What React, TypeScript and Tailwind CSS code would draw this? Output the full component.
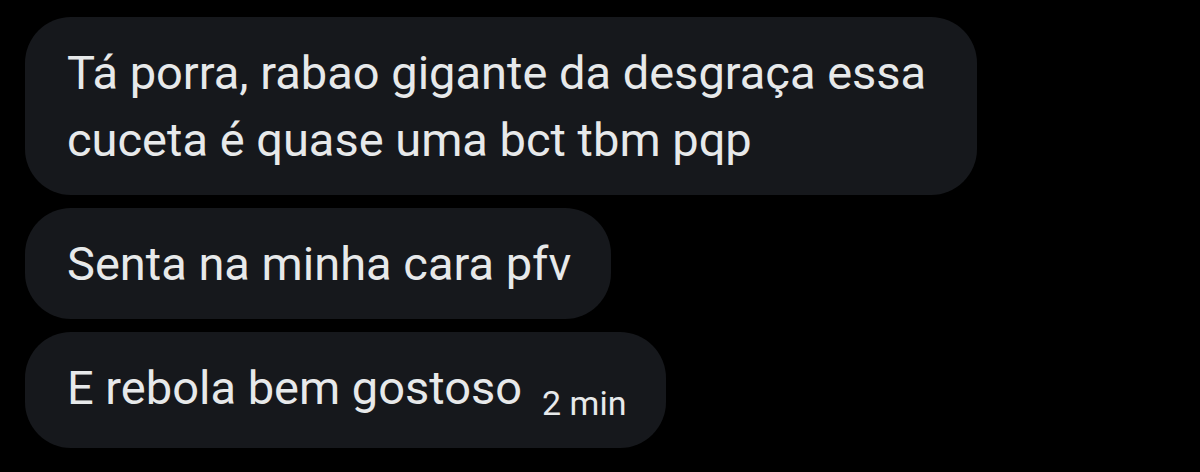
const messages = [
  { lines: ['Tá porra, rabao gigante da desgraça essa', 'cuceta é quase uma bct tbm pqp'], wide: true },
  { lines: ['Senta na minha cara pfv'] },
  { lines: ['E rebola bem gostoso'], time: '2 min' },
]

export default function App() {
  return (
    <div
      className="min-h-screen w-full bg-black pl-[25px] pt-[17px] text-[#e7e9ea]"
      style={{ fontFamily: 'Roboto, "Noto Sans", sans-serif' }}
    >
      <div className="flex flex-col items-start gap-[13px]">
        {messages.map((m, i) => (
          <div
            key={i}
            className={
              m.wide
                ? 'w-[952px] rounded-[46px] bg-[#16181c] py-[22px] pl-[42px] pr-[40px] text-[47px] leading-[67px]'
                : 'w-fit rounded-[46px] bg-[#16181c] py-[22px] pl-[42px] pr-[40px] text-[47px] leading-[67px]'
            }
          >
            {m.lines.map((line, j) => (
              <div key={j} className="whitespace-nowrap">
                {line}
                {m.time && (
                  <span className="ml-[20px] inline-block translate-y-[11px] text-[34px]">{m.time}</span>
                )}
              </div>
            ))}
          </div>
        ))}
      </div>
    </div>
  )
}
